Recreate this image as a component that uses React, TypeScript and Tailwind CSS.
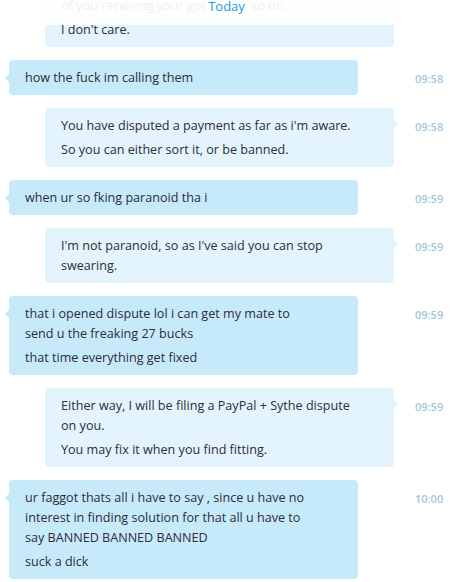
type Msg = {
  side: "out" | "in";
  time?: string;
  paras: string[][];
};

const messages: Msg[] = [
  {
    side: "out",
    time: "09:58",
    paras: [["how the fuck im calling them"]],
  },
  {
    side: "in",
    time: "09:58",
    paras: [
      ["You have disputed a payment as far as i'm aware."],
      ["So you can either sort it, or be banned."],
    ],
  },
  {
    side: "out",
    time: "09:59",
    paras: [["when ur so fking paranoid tha i"]],
  },
  {
    side: "in",
    time: "09:59",
    paras: [["I'm not paranoid, so as I've said you can stop", "swearing."]],
  },
  {
    side: "out",
    time: "09:59",
    paras: [
      ["that i opened dispute lol i can get my mate to", "send u the freaking 27 bucks"],
      ["that time everything get fixed"],
    ],
  },
  {
    side: "in",
    time: "09:59",
    paras: [
      ["Either way, I will be filing a PayPal + Sythe dispute", "on you."],
      ["You may fix it when you find fitting."],
    ],
  },
  {
    side: "out",
    time: "10:00",
    paras: [
      [
        "ur faggot thats all i have to say , since u have no",
        "interest in finding solution for that all u have to",
        "say BANNED BANNED BANNED",
      ],
      ["suck a dick"],
    ],
  },
];

function Bubble({ msg, first }: { msg: Msg; first?: boolean }) {
  const out = msg.side === "out";
  return (
    <div className={`flex items-start ${first ? "-mt-[12px]" : "mt-[13px]"}`}>
      <div className="w-[394px] shrink-0">
        <div
          className={`relative w-[349px] rounded-[4px] px-4 pt-2 pb-[7px] ${
            out ? "ml-[9px] bg-[#c6eaf9]" : "ml-[45px] bg-[#e3f4fc]"
          }`}
        >
          {!first && (
            <span
              className={`absolute h-[6px] w-[6px] rotate-45 rounded-[1px] ${
                out
                  ? "-left-[3px] top-[15px] bg-[#c6eaf9]"
                  : "-right-[3px] top-[13px] bg-[#e3f4fc]"
              }`}
            />
          )}
          {msg.paras.map((lines, i) => (
            <p
              key={i}
              className={`text-[12.6px] leading-[20px] text-[#2e2c3a] ${i > 0 ? "mt-[4px]" : ""}`}
            >
              {lines.map((l, j) => (
                <span key={j} className="block whitespace-nowrap">
                  {l}
                </span>
              ))}
            </p>
          ))}
        </div>
      </div>
      {msg.time && (
        <div className="pl-[21px] pt-[9px] text-[11px] font-semibold leading-[20px] text-[#a3c6db]">
          {msg.time}
        </div>
      )}
    </div>
  );
}

export default function App() {
  return (
    <div
      className="relative h-[582px] w-[453px] overflow-hidden bg-white"
      style={{ fontFamily: '"Open Sans", "Noto Sans", sans-serif' }}
    >
      {/* chat history */}
      <div className="flex flex-col">
        <Bubble
          first
          msg={{
            side: "in",
            paras: [["of you receiving your goods and so on."], ["I don't care."]],
          }}
        />
        {messages.map((m, i) => (
          <Bubble key={i} msg={m} />
        ))}
      </div>

      {/* sticky date header */}
      <div className="absolute inset-x-0 top-0 flex h-[25px] items-start justify-center bg-white/[0.92]">
        <span className="-mt-[4px] bg-white px-[2px] text-[13px] leading-[20px] text-[#1a9be0]">
          Today
        </span>
      </div>
    </div>
  );
}
